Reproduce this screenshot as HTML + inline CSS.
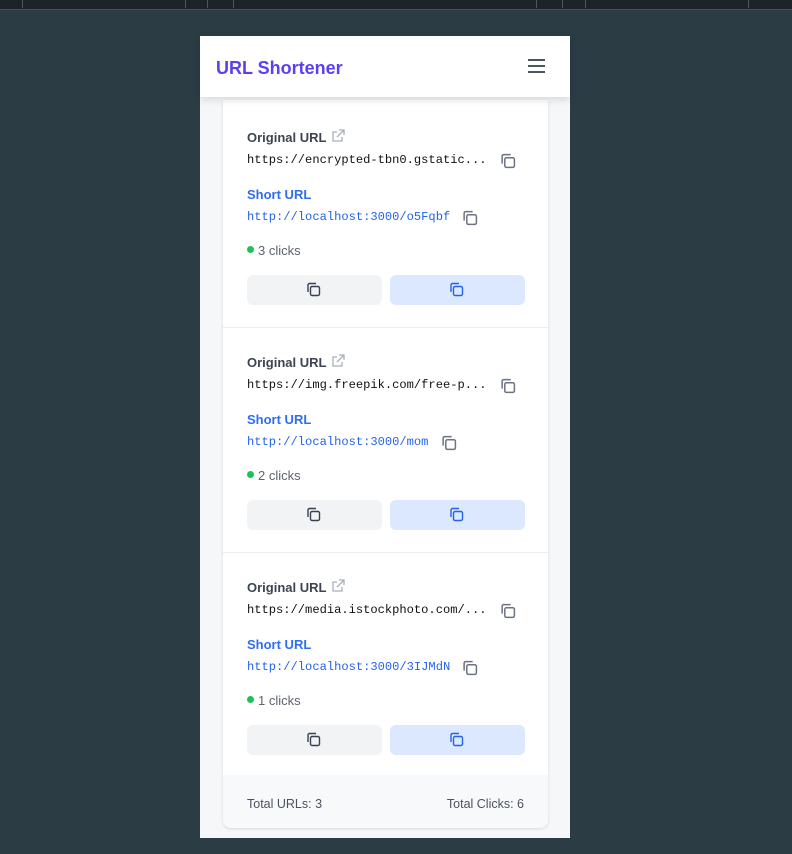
<!DOCTYPE html>
<html><head><meta charset="utf-8"><style>
*{box-sizing:border-box;margin:0;padding:0}
body{width:792px;height:854px;background:#2b3c45;font-family:"Liberation Sans","DejaVu Sans",sans-serif;position:relative;overflow:hidden}
.top{position:absolute;left:0;top:0;width:792px;height:10px;background:#1c2329;border-bottom:1px solid #3d4f58}
.tick{position:absolute;top:0;width:1px;height:8px;background:#4a5a62}
.phone{position:absolute;left:200px;top:36px;width:370px;height:802px;background:#f6f7f9}
.hdr{position:absolute;left:0;top:0;width:370px;height:61px;background:#fff;box-shadow:0 3px 8px rgba(0,0,0,.12);z-index:2}
.hdr h1{position:absolute;left:16px;top:22px;font-size:18px;font-weight:bold;color:#5b3ff0}
.card{position:absolute;left:23px;top:64px;width:325px;height:728px;background:#fff;border-radius:0 0 8px 8px;box-shadow:0 1px 3px rgba(0,0,0,.12);overflow:hidden}
.item{position:absolute;left:0;width:325px;height:225px;border-bottom:1px solid #eceef1}
.lbl{position:absolute;left:24px;font-size:13px;line-height:16px;font-weight:bold;color:#3d4451}
.mono{position:absolute;left:24px;font-family:"Liberation Mono","DejaVu Sans Mono",monospace;font-size:12.1px;line-height:15px;color:#111}
.ic{position:absolute}
.clk{position:absolute;left:24px;font-size:13px;line-height:16px;color:#5d6470}
.clk:before{content:"";display:inline-block;width:7px;height:7px;border-radius:50%;background:#1dc256;margin-right:4px;vertical-align:2px}
.b1,.b2{position:absolute;top:172px;width:135px;height:30px;border-radius:6px}
.b1{left:24px;background:#f2f3f5}.b2{left:167px;background:#dbe8fe}
.b1 svg,.b2 svg{position:absolute;left:59px;top:7px}
.foot{position:absolute;left:0;top:675px;width:325px;height:53px;background:#f8f9fa;font-size:12.5px;color:#4b5260}
</style></head><body>
<div class="top"><div class="tick" style="left:22px"></div><div class="tick" style="left:185px"></div><div class="tick" style="left:207px"></div><div class="tick" style="left:233px"></div><div class="tick" style="left:536px"></div><div class="tick" style="left:562px"></div><div class="tick" style="left:585px"></div><div class="tick" style="left:748px"></div></div>
<div class="phone">
<div class="hdr"><h1>URL Shortener</h1>
<svg style="position:absolute;left:327px;top:22px" width="19" height="16" viewBox="0 0 19 16"><path d="M1 2h17M1 8h17M1 14h17" stroke="#4b5563" stroke-width="2"/></svg></div>
<div class="card">
<div class="item" style="top:3px">
<div class="lbl" style="top:27px">Original URL</div>
<svg class="ic" style="left:108px;top:26px" width="14" height="14" viewBox="0 0 14 14" fill="none" stroke="#aab0b8" stroke-width="1.3"><path d="M6 3H2v9h9V8M8 1h5v5M13 1L6 8"/></svg>
<div class="mono" style="top:50px">https://encrypted-tbn0.gstatic...</div>
<svg class="ic" style="left:277px;top:50px" width="16" height="16" viewBox="0 0 15 15" fill="none" stroke="#6b7280" stroke-width="1.4"><rect x="4.5" y="4.5" width="9" height="9" rx="1.5"/><path d="M2 10V3a1.5 1.5 0 0 1 1.5-1.5H10"/></svg>
<div class="lbl" style="top:84px;color:#2f6ef3">Short URL</div>
<div class="mono" style="top:107px;color:#2563eb">http://localhost:3000/o5Fqbf</div>
<svg class="ic" style="left:239px;top:107px" width="16" height="16" viewBox="0 0 15 15" fill="none" stroke="#6b7280" stroke-width="1.4"><rect x="4.5" y="4.5" width="9" height="9" rx="1.5"/><path d="M2 10V3a1.5 1.5 0 0 1 1.5-1.5H10"/></svg>
<div class="clk" style="top:140px">3 clicks</div>
<div class="b1"><svg width="15" height="15" viewBox="0 0 15 15" fill="none" stroke="#374151" stroke-width="1.4"><rect x="4.5" y="4.5" width="9" height="9" rx="1.5"/><path d="M2 10V3a1.5 1.5 0 0 1 1.5-1.5H10"/></svg></div>
<div class="b2"><svg width="15" height="15" viewBox="0 0 15 15" fill="none" stroke="#2563eb" stroke-width="1.4"><rect x="4.5" y="4.5" width="9" height="9" rx="1.5"/><path d="M2 10V3a1.5 1.5 0 0 1 1.5-1.5H10"/></svg></div>
</div>
<div class="item" style="top:228px">
<div class="lbl" style="top:27px">Original URL</div>
<svg class="ic" style="left:108px;top:26px" width="14" height="14" viewBox="0 0 14 14" fill="none" stroke="#aab0b8" stroke-width="1.3"><path d="M6 3H2v9h9V8M8 1h5v5M13 1L6 8"/></svg>
<div class="mono" style="top:50px">https://img.freepik.com/free-p...</div>
<svg class="ic" style="left:277px;top:50px" width="16" height="16" viewBox="0 0 15 15" fill="none" stroke="#6b7280" stroke-width="1.4"><rect x="4.5" y="4.5" width="9" height="9" rx="1.5"/><path d="M2 10V3a1.5 1.5 0 0 1 1.5-1.5H10"/></svg>
<div class="lbl" style="top:84px;color:#2f6ef3">Short URL</div>
<div class="mono" style="top:107px;color:#2563eb">http://localhost:3000/mom</div>
<svg class="ic" style="left:218px;top:107px" width="16" height="16" viewBox="0 0 15 15" fill="none" stroke="#6b7280" stroke-width="1.4"><rect x="4.5" y="4.5" width="9" height="9" rx="1.5"/><path d="M2 10V3a1.5 1.5 0 0 1 1.5-1.5H10"/></svg>
<div class="clk" style="top:140px">2 clicks</div>
<div class="b1"><svg width="15" height="15" viewBox="0 0 15 15" fill="none" stroke="#374151" stroke-width="1.4"><rect x="4.5" y="4.5" width="9" height="9" rx="1.5"/><path d="M2 10V3a1.5 1.5 0 0 1 1.5-1.5H10"/></svg></div>
<div class="b2"><svg width="15" height="15" viewBox="0 0 15 15" fill="none" stroke="#2563eb" stroke-width="1.4"><rect x="4.5" y="4.5" width="9" height="9" rx="1.5"/><path d="M2 10V3a1.5 1.5 0 0 1 1.5-1.5H10"/></svg></div>
</div>
<div class="item" style="top:453px">
<div class="lbl" style="top:27px">Original URL</div>
<svg class="ic" style="left:108px;top:26px" width="14" height="14" viewBox="0 0 14 14" fill="none" stroke="#aab0b8" stroke-width="1.3"><path d="M6 3H2v9h9V8M8 1h5v5M13 1L6 8"/></svg>
<div class="mono" style="top:50px">https://media.istockphoto.com/...</div>
<svg class="ic" style="left:277px;top:50px" width="16" height="16" viewBox="0 0 15 15" fill="none" stroke="#6b7280" stroke-width="1.4"><rect x="4.5" y="4.5" width="9" height="9" rx="1.5"/><path d="M2 10V3a1.5 1.5 0 0 1 1.5-1.5H10"/></svg>
<div class="lbl" style="top:84px;color:#2f6ef3">Short URL</div>
<div class="mono" style="top:107px;color:#2563eb">http://localhost:3000/3IJMdN</div>
<svg class="ic" style="left:239px;top:107px" width="16" height="16" viewBox="0 0 15 15" fill="none" stroke="#6b7280" stroke-width="1.4"><rect x="4.5" y="4.5" width="9" height="9" rx="1.5"/><path d="M2 10V3a1.5 1.5 0 0 1 1.5-1.5H10"/></svg>
<div class="clk" style="top:140px">1 clicks</div>
<div class="b1"><svg width="15" height="15" viewBox="0 0 15 15" fill="none" stroke="#374151" stroke-width="1.4"><rect x="4.5" y="4.5" width="9" height="9" rx="1.5"/><path d="M2 10V3a1.5 1.5 0 0 1 1.5-1.5H10"/></svg></div>
<div class="b2"><svg width="15" height="15" viewBox="0 0 15 15" fill="none" stroke="#2563eb" stroke-width="1.4"><rect x="4.5" y="4.5" width="9" height="9" rx="1.5"/><path d="M2 10V3a1.5 1.5 0 0 1 1.5-1.5H10"/></svg></div>
</div>
<div class="foot"><span style="position:absolute;left:24px;top:22px">Total URLs: 3</span><span style="position:absolute;right:24px;top:22px">Total Clicks: 6</span></div>
</div>
</div>
</body></html>
